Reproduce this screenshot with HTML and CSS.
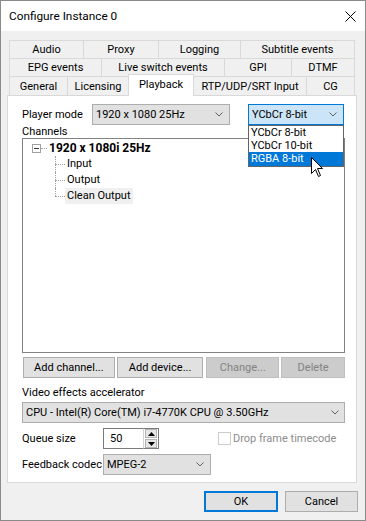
FILE: index.html
```html
<!DOCTYPE html>
<html lang="en">
<head>
  <meta charset="UTF-8">
  <title>Configure Instance 0</title>
  <link rel="stylesheet" href="styles.css">
</head>
<body>
  <div class="window">
    <div class="titlebar">
      <span class="title">Configure Instance 0</span>
      <svg class="close" width="11" height="11" viewBox="0 0 11 11">
        <path d="M0.5 0.5 L10.5 10.5 M10.5 0.5 L0.5 10.5" stroke="#000" stroke-width="1" fill="none"/>
      </svg>
    </div>

    <div class="dialog">
      <div class="tabs">
        <div class="tab-row row-1">
          <div class="tab">Audio</div>
          <div class="tab">Proxy</div>
          <div class="tab">Logging</div>
          <div class="tab">Subtitle events</div>
        </div>
        <div class="tab-row row-2">
          <div class="tab">EPG events</div>
          <div class="tab">Live switch events</div>
          <div class="tab">GPI</div>
          <div class="tab">DTMF</div>
        </div>
        <div class="tab-row row-3">
          <div class="tab">General</div>
          <div class="tab">Licensing</div>
          <div class="tab active">Playback</div>
          <div class="tab">RTP/UDP/SRT Input</div>
          <div class="tab">CG</div>
        </div>
      </div>

      <div class="panel">
        <div class="field-row player-row">
          <span class="label">Player mode</span>
          <div class="combo combo-mode">
            <span>1920 x 1080 25Hz</span>
            <svg class="chevron" width="8" height="5" viewBox="0 0 8 5"><path d="M0.5 0.5 L4 4 L7.5 0.5" fill="none" stroke="#606060"/></svg>
          </div>
          <div class="combo-wrap">
            <div class="combo focused">
              <span>YCbCr 8-bit</span>
              <svg class="chevron" width="8" height="5" viewBox="0 0 8 5"><path d="M0.5 0.5 L4 4 L7.5 0.5" fill="none" stroke="#606060"/></svg>
            </div>
            <ul class="droplist">
              <li>YCbCr 8-bit</li>
              <li>YCbCr 10-bit</li>
              <li class="hover">RGBA 8-bit</li>
            </ul>
            <svg class="cursor" width="13" height="21" viewBox="0 0 13 21">
              <path d="M0.5 0.5 L0.5 16.5 L4.5 12.5 L7.5 19.5 L9.5 18.5 L6.5 11.5 L11.5 11.5 Z" fill="#fff" stroke="#000" stroke-width="1" stroke-linejoin="miter"/>
            </svg>
          </div>
        </div>

        <div class="caption channels">Channels</div>
        <div class="tree">
          <div class="root">
            <span class="expander"></span>
            <span class="stub"></span>
            <b>1920 x 1080i 25Hz</b>
          </div>
          <div class="children">
            <div class="leaf"><span>Input</span></div>
            <div class="leaf"><span>Output</span></div>
            <div class="leaf selected"><span>Clean Output</span></div>
          </div>
        </div>

        <div class="button-row">
          <button class="btn">Add channel...</button>
          <button class="btn">Add device...</button>
          <button class="btn" disabled>Change...</button>
          <button class="btn" disabled>Delete</button>
        </div>

        <div class="caption accel">Video effects accelerator</div>
        <div class="combo combo-cpu">
          <span>CPU - Intel(R) Core(TM) i7-4770K CPU @ 3.50GHz</span>
          <svg class="chevron" width="8" height="5" viewBox="0 0 8 5"><path d="M0.5 0.5 L4 4 L7.5 0.5" fill="none" stroke="#606060"/></svg>
        </div>

        <div class="field-row queue-row">
          <span class="label wide">Queue size</span>
          <div class="spin">
            <div class="spin-input">50</div>
            <div class="spin-btns">
              <span class="spin-btn"><svg width="7" height="4" viewBox="0 0 7 4"><path d="M3.5 0 L7 4 L0 4 Z" fill="#000"/></svg></span>
              <span class="spin-btn"><svg width="7" height="4" viewBox="0 0 7 4"><path d="M0 0 L7 0 L3.5 4 Z" fill="#000"/></svg></span>
            </div>
          </div>
          <div class="check disabled">
            <span class="box"></span>
            <span>Drop frame timecode</span>
          </div>
        </div>

        <div class="field-row codec-row">
          <span class="label wide">Feedback codec</span>
          <div class="combo combo-codec">
            <span>MPEG-2</span>
            <svg class="chevron" width="8" height="5" viewBox="0 0 8 5"><path d="M0.5 0.5 L4 4 L7.5 0.5" fill="none" stroke="#606060"/></svg>
          </div>
        </div>
      </div>

      <div class="footer">
        <button class="btn default">OK</button>
        <button class="btn">Cancel</button>
      </div>
    </div>
  </div>
</body>
</html>
```

FILE: styles.css
```css
* {
  box-sizing: border-box;
}
body {
  margin: 0;
  font-family: Roboto, "Liberation Sans", sans-serif;
  font-size: 11px;
  color: #000;
  background: #fff;
}
.window {
  width: 366px;
  height: 521px;
  border: 1px solid #8a8a8a;
  background: #f0f0f0;
  display: flex;
  flex-direction: column;
}
.titlebar {
  height: 30px;
  background: #fff;
  display: flex;
  align-items: center;
  justify-content: space-between;
  padding: 0 9px 0 8px;
}
.title {
  font-size: 11.8px;
}
.dialog {
  flex: 1;
  padding: 9px 8px 0 6px;
}

/* tabs */
.tabs {
  padding: 0 2px;
}
.tab-row {
  display: flex;
  height: 18px;
}
.tab {
  height: 18px;
  border: 1px solid #d9d9d9;
  border-bottom: none;
  display: flex;
  align-items: center;
  justify-content: center;
  white-space: nowrap;
  background: #f0f0f0;
}
.tab + .tab {
  margin-left: -1px;
}
.row-1 .tab:nth-child(1) { width: 75px; }
.row-1 .tab:nth-child(2) { width: 76px; }
.row-1 .tab:nth-child(3) { width: 83px; }
.row-1 .tab:nth-child(4) { width: 115px; }
.row-2 .tab:nth-child(1) { width: 93px; }
.row-2 .tab:nth-child(2) { width: 124px; }
.row-2 .tab:nth-child(3) { width: 68px; }
.row-2 .tab:nth-child(4) { width: 64px; }
.row-3 {
  height: 19px;
}
.row-3 .tab {
  height: 19px;
}
.row-3 .tab:nth-child(1) { width: 59px; }
.row-3 .tab:nth-child(2) { width: 62px; }
.row-3 .tab:nth-child(3) { width: 66px; }
.row-3 .tab:nth-child(4) { width: 114px; }
.row-3 .tab:nth-child(5) { width: 49px; }
.row-3 .tab.active {
  height: 22px;
  margin-top: -2px;
  margin-bottom: -1px;
  padding-bottom: 2px;
  background: #fff;
  position: relative;
  z-index: 1;
}

/* panel */
.panel {
  height: 388px;
  background: #fff;
  border: 1px solid #d9d9d9;
  padding: 8px 11px 0 14px;
  display: flex;
  flex-direction: column;
}
.field-row {
  display: flex;
  align-items: center;
  height: 21px;
}
.label {
  width: 70px;
  flex: none;
  white-space: nowrap;
}
.label.wide {
  width: 81px;
}
.combo {
  height: 21px;
  border: 1px solid #adadad;
  background: #e1e1e1;
  display: flex;
  align-items: center;
  justify-content: space-between;
  padding: 0 6px 0 3px;
  white-space: nowrap;
  flex: none;
}
.combo.focused {
  background: #cce4f7;
  border-color: #0078d7;
}
.combo-mode {
  width: 138px;
}
.combo-wrap {
  position: relative;
  margin-left: 18px;
  width: 96px;
}
.droplist {
  position: absolute;
  top: 21px;
  left: 0;
  width: 96px;
  margin: 0;
  padding: 0;
  list-style: none;
  background: #fff;
  border: 1px solid #646464;
  z-index: 2;
}
.droplist li {
  height: 13px;
  line-height: 13px;
  padding-left: 2px;
}
.droplist li.hover {
  height: 14px;
  line-height: 14px;
  background: #0078d7;
  color: #fff;
}
.cursor {
  position: absolute;
  left: 63px;
  top: 53px;
  z-index: 3;
}
.caption {
  height: 13px;
  line-height: 13px;
}
.caption.accel {
  margin-top: 7px;
  height: 15px;
  line-height: 15px;
}

/* tree */
.tree {
  height: 215px;
  border: 1px solid #828282;
  padding: 1px 0 0 9px;
  flex: none;
}
.root {
  height: 16px;
  display: flex;
  align-items: center;
}
.expander {
  width: 9px;
  height: 9px;
  border: 1px solid #a0a0a0;
  position: relative;
}
.expander::after {
  content: "";
  position: absolute;
  left: 1px;
  top: 3px;
  width: 5px;
  height: 1px;
  background: #333;
}
.stub {
  width: 6px;
  border-top: 1px dotted #a0a0a0;
}
.root b {
  margin-left: 2px;
  font-size: 12px;
}
.children {
  margin-left: 23px;
}
.leaf {
  height: 16px;
  display: flex;
  align-items: center;
  padding-left: 10px;
  position: relative;
}
.leaf::before {
  content: "";
  position: absolute;
  left: 0;
  top: 0;
  height: 16px;
  border-left: 1px dotted #a0a0a0;
}
.leaf:last-child::before {
  height: 8px;
}
.leaf::after {
  content: "";
  position: absolute;
  left: 0;
  top: 8px;
  width: 10px;
  border-top: 1px dotted #a0a0a0;
}
.leaf span {
  padding: 0 2px;
  line-height: 16px;
}
.leaf.selected span {
  background: #f0f0f0;
}

/* buttons */
.btn {
  height: 21px;
  border: 1px solid #adadad;
  background: #e1e1e1;
  font-family: inherit;
  font-size: 11px;
  color: #000;
  padding: 0;
  white-space: nowrap;
}
.btn:disabled {
  background: #cccccc;
  border-color: #bfbfbf;
  color: #838383;
}
.button-row {
  display: flex;
  margin: 4px 0 0 1px;
  gap: 3px;
}
.button-row .btn:nth-child(1) { width: 92px; margin-right: -1px; }
.button-row .btn:nth-child(2) { width: 87px; }
.button-row .btn:nth-child(3) { width: 73px; margin-right: -1px; }
.button-row .btn:nth-child(4) { width: 64px; }

.combo-cpu {
  margin-top: 2px;
  padding-right: 5px;
}
.queue-row {
  margin-top: 5px;
}
.spin {
  display: flex;
  height: 21px;
  flex: none;
}
.spin-input {
  width: 40px;
  border: 1px solid #7a7a7a;
  border-right: none;
  padding-left: 6px;
  display: flex;
  align-items: center;
}
.spin-btns {
  width: 16px;
  border: 1px solid #7a7a7a;
  border-left: 1px solid #d0d0d0;
  display: flex;
  flex-direction: column;
  padding: 0 1px;
}
.spin-btn {
  flex: 1;
  display: flex;
  align-items: center;
  justify-content: center;
  background: #e6e6e6;
  border: 1px solid #b5b5b5;
}
.spin-btn + .spin-btn {
  margin-top: 1px;
}
.check {
  display: flex;
  align-items: center;
  margin-left: 59px;
  white-space: nowrap;
  flex: none;
}
.check .box {
  width: 13px;
  height: 13px;
  border: 1px solid #cccccc;
  background: #fff;
  margin-right: 2px;
}
.check.disabled {
  color: #8c8c8c;
}
.codec-row {
  margin-top: 5px;
}
.combo-codec {
  width: 108px;
}

/* footer */
.footer {
  display: flex;
  justify-content: flex-end;
  gap: 7px;
  margin: 8px -1px 0 0;
}
.footer .btn {
  width: 73px;
}
.footer .btn.default {
  width: 74px;
  border: 2px solid #0078d7;
}
```
